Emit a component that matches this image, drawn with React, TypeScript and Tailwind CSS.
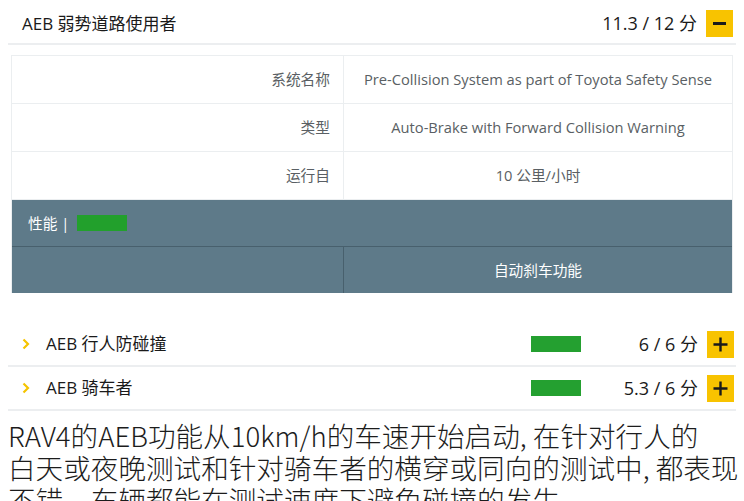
import {ReactNode} from "react";

const font = {fontFamily: '"Open Sans", "Noto Sans CJK SC", sans-serif'}

const ScoreButton = ({sign}: { sign: '+' | '-' }) => (
    <div className="w-[27px] h-[27px] bg-[#f8c300] flex items-center justify-center shrink-0">
        {sign == '-'
            ? <div className="w-[13px] h-[3px] bg-[#1a1a1a]"/>
            : <svg width="17" height="17" viewBox="0 0 17 17">
                <path d="M8.5 1.5v14M1.5 8.5h14" stroke="#1a1a1a" strokeWidth="2.4"/>
            </svg>}
    </div>
)

const InfoRow = ({label, value}: { label: string, value: string }) => (
    <div className="flex h-[48px] border-b border-[#ebeef0] text-[14.7px] text-[#5a5f64]">
        <div className="w-[332px] border-r border-[#ebeef0] flex items-center justify-end pr-[13px]">{label}</div>
        <div className="flex-1 flex items-center justify-center">{value}</div>
    </div>
)

const TestRow = ({title, score}: { title: ReactNode, score: string }) => (
    <div className="flex items-center h-[44px] border-b-2 border-[#eceef0] pl-[14px] pr-[2px]">
        <div className="w-[24px]">
            <svg width="8" height="12" viewBox="0 0 8 12">
                <path d="M1.5 1.5L6 6l-4.5 4.5" fill="none" stroke="#f5c400" strokeWidth="2.2"/>
            </svg>
        </div>
        <span className="text-[17px] text-[#1a1a1a] flex-1">{title}</span>
        <div className="w-[50px] h-[16px] bg-[#24a030]"/>
        <span className="w-[126px] text-right text-[18px] text-[#1a1a1a] pr-[9px]">{score}</span>
        <ScoreButton sign="+"/>
    </div>
)

export default function App() {
    return (
        <div className="w-[744px] h-[501px] overflow-hidden bg-white" style={font}>
            <div className="px-[8px] pt-[10px]">
                <div className="flex items-center h-[27px] pl-[14px] pr-[3px]">
                    <span className="flex-1 text-[17px] text-[#1a1a1a]">AEB 弱势道路使用者</span>
                    <span className="text-[18px] text-[#1a1a1a] pr-[9px]">11.3 / 12 分</span>
                    <ScoreButton sign="-"/>
                </div>
                <div className="h-[8px] border-b-2 border-[#eceef0]"/>
                <div className="ml-[3px] mr-[3px] mt-[10px] border border-[#ebeef0] border-b-0">
                    <InfoRow label="系统名称" value="Pre-Collision System as part of Toyota Safety Sense"/>
                    <InfoRow label="类型" value="Auto-Brake with Forward Collision Warning"/>
                    <InfoRow label="运行自" value="10 公里/小时"/>
                    <div className="bg-[#5e7a89] text-white text-[14.7px]">
                        <div className="h-[47px] flex items-center pl-[16px] border-b border-[#48606d]">
                            <span>性能 |</span>
                            <div className="ml-[8px] w-[50px] h-[16px] bg-[#22a02c]"/>
                        </div>
                        <div className="flex h-[46px]">
                            <div className="w-[332px] border-r border-[#48606d]"/>
                            <div className="flex-1 flex items-center justify-center">自动刹车功能</div>
                        </div>
                    </div>
                </div>
                <div className="mt-[30px]">
                    <TestRow title="AEB 行人防碰撞" score="6 / 6 分"/>
                    <TestRow title="AEB 骑车者" score="5.3 / 6 分"/>
                </div>
            </div>
            <p className="px-[8px] pt-[8px] text-[27.6px] leading-[32px] text-[#1c1c1c] font-light whitespace-nowrap"
               style={{fontFamily: '"Noto Sans CJK SC", sans-serif'}}>
                RAV4的AEB功能从10km/h的车速开始启动, 在针对行人的<br/>
                白天或夜晚测试和针对骑车者的横穿或同向的测试中, 都表现<br/>
                不错，车辆都能在测试速度下避免碰撞的发生。
            </p>
        </div>
    )
}
